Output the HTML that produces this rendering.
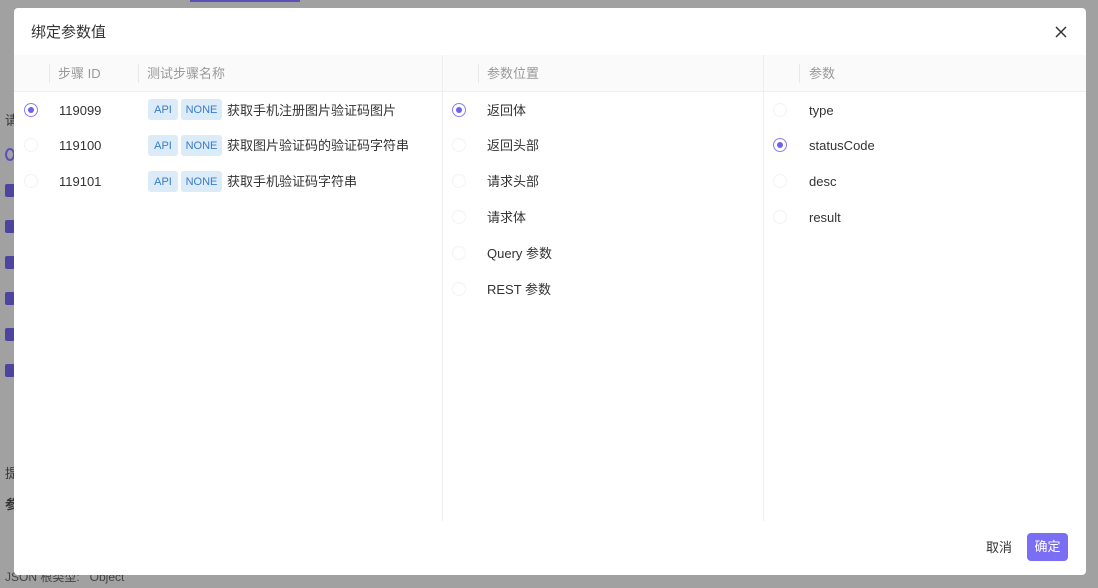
<!DOCTYPE html>
<html><head><meta charset="utf-8"><style>
*{box-sizing:border-box;margin:0;padding:0}
body{width:1098px;height:588px;background:#a1a1a1;position:relative;overflow:hidden;font-family:"Liberation Sans","Noto Sans CJK SC",sans-serif;color:#333;font-size:13px;line-height:20px}
.abs{position:absolute}
.cb{position:absolute;left:5px;width:10px;height:13px;background:#4d44a0;border-radius:2px}
.modal{position:absolute;left:14px;top:8px;width:1072px;height:567px;background:#fff;border-radius:4px;overflow:hidden}
.title{position:absolute;left:17px;top:14px;font-size:15px;line-height:22px;color:#333}
.close{position:absolute;left:1040px;top:17px}
.hdr{position:absolute;top:47px;height:37px;background:#fafafa;border-bottom:1px solid #f0f0f0}
.hdr span{position:absolute;top:9px;color:#999;font-size:13px;line-height:20px}
.sep{position:absolute;top:9px;width:1px;height:19px;background:#e8e8e8}
.vl{position:absolute;top:47px;width:1px;height:466px;background:#eee}
.row{position:absolute;font-size:13px;color:#333;line-height:20px}
.r{position:absolute;width:14px;height:14px;border-radius:50%;border:1px solid #f3f3f3}
.r.on{border-color:#8b80f0}
.r.on::after{content:"";position:absolute;left:3px;top:3px;width:6px;height:6px;border-radius:50%;background:#6c63e8}
.tag{position:absolute;height:21px;padding-top:3px;text-align:center;background:#dcebf8;color:#3a7cc9;font-size:11px;border-radius:3px;line-height:16px}
.a{width:30px}.n{width:41px}
.btn{position:absolute;left:1013px;top:525px;width:41px;height:28px;background:#7a6ef5;color:#fff;border-radius:4px;text-align:center;padding-top:4px;font-size:13px;line-height:20px}
</style></head><body>
<div class="abs" style="left:190px;top:0;width:110px;height:2px;background:#5a50b8"></div>
<div class="abs" style="left:5px;top:111px;font-size:13px;color:#333">请</div>
<div class="abs" style="left:5px;top:148px;width:10px;height:13px;border:2px solid #5a50b8;border-radius:50%"></div>
<div class="cb" style="top:184px"></div><div class="cb" style="top:220px"></div><div class="cb" style="top:256px"></div><div class="cb" style="top:292px"></div><div class="cb" style="top:328px"></div><div class="cb" style="top:364px"></div>
<div class="abs" style="left:5px;top:464px">提</div>
<div class="abs" style="left:5px;top:495px;font-weight:bold">参</div>
<div class="abs" style="left:5px;top:567px;font-size:12px;color:#444">JSON 根类型:&nbsp;&nbsp;&nbsp;Object</div>
<div class="modal">
<div class="title">绑定参数值</div>
<svg class="close" width="14" height="14" viewBox="0 0 14 14"><path d="M2 2L12 12M12 2L2 12" stroke="#333" stroke-width="1.5"/></svg>
<div class="hdr" style="left:0;width:428px"><div class="sep" style="left:35px"></div><span style="left:44px">步骤 ID</span><div class="sep" style="left:124px"></div><span style="left:133px">测试步骤名称</span></div>
<div class="hdr" style="left:429px;width:320px"><div class="sep" style="left:35px"></div><span style="left:44px">参数位置</span></div>
<div class="hdr" style="left:750px;width:322px"><div class="sep" style="left:35px"></div><span style="left:45px">参数</span></div>
<div class="vl" style="left:428px"></div><div class="vl" style="left:749px"></div>

<div class="r on" style="left:10px;top:95px"></div><div class="row" style="left:45px;top:93px">119099</div>
<div class="tag a" style="left:134px;top:91px">API</div><div class="tag n" style="left:167px;top:91px">NONE</div><div class="row" style="left:213px;top:93px">获取手机注册图片验证码图片</div>
<div class="r" style="left:10px;top:130px"></div><div class="row" style="left:45px;top:128px">119100</div>
<div class="tag a" style="left:134px;top:127px">API</div><div class="tag n" style="left:167px;top:127px">NONE</div><div class="row" style="left:213px;top:128px">获取图片验证码的验证码字符串</div>
<div class="r" style="left:10px;top:166px"></div><div class="row" style="left:45px;top:164px">119101</div>
<div class="tag a" style="left:134px;top:163px">API</div><div class="tag n" style="left:167px;top:163px">NONE</div><div class="row" style="left:213px;top:164px">获取手机验证码字符串</div>

<div class="r on" style="left:438px;top:95px"></div><div class="row" style="left:473px;top:93px">返回体</div>
<div class="r" style="left:438px;top:130px"></div><div class="row" style="left:473px;top:128px">返回头部</div>
<div class="r" style="left:438px;top:166px"></div><div class="row" style="left:473px;top:164px">请求头部</div>
<div class="r" style="left:438px;top:202px"></div><div class="row" style="left:473px;top:200px">请求体</div>
<div class="r" style="left:438px;top:238px"></div><div class="row" style="left:473px;top:236px">Query 参数</div>
<div class="r" style="left:438px;top:274px"></div><div class="row" style="left:473px;top:272px">REST 参数</div>

<div class="r" style="left:759px;top:95px"></div><div class="row" style="left:795px;top:93px">type</div>
<div class="r on" style="left:759px;top:130px"></div><div class="row" style="left:795px;top:128px">statusCode</div>
<div class="r" style="left:759px;top:166px"></div><div class="row" style="left:795px;top:164px">desc</div>
<div class="r" style="left:759px;top:202px"></div><div class="row" style="left:795px;top:200px">result</div>

<div class="row" style="left:972px;top:530px">取消</div>
<div class="btn">确定</div>
</div>
</body></html>
